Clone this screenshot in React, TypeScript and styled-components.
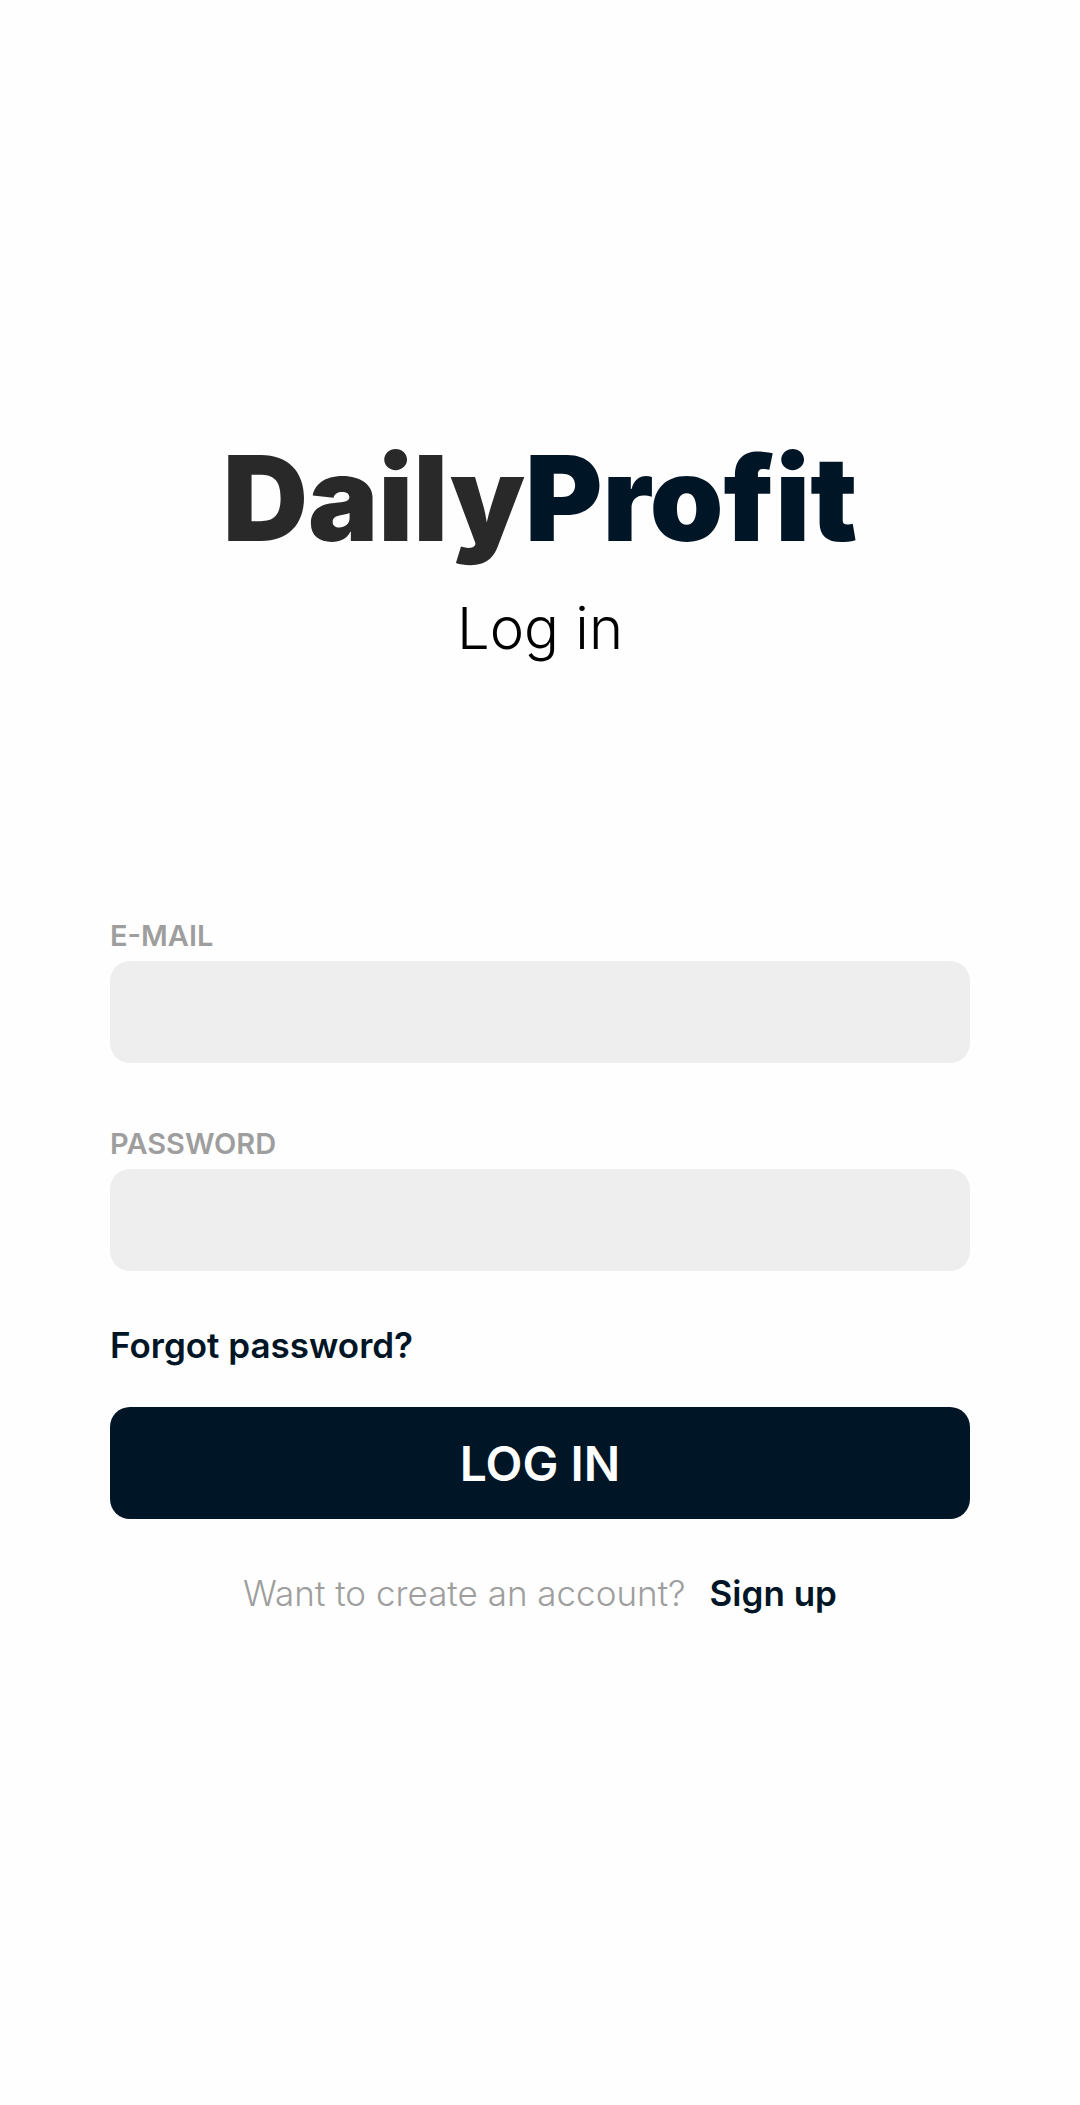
import React from "react";
import styled, { createGlobalStyle } from "styled-components";

const ink = "#001526";
const muted = "#9e9e9e";

const GlobalStyle = createGlobalStyle`
  * { box-sizing: border-box; }
  body {
    margin: 0;
    background: #fefefe;
    font-family: Inter, "Liberation Sans", sans-serif;
  }
`;

const Page = styled.main`
  min-height: 100vh;
  padding: 0 110px 56px;
  display: flex;
  flex-direction: column;
  justify-content: center;
`;

const Header = styled.header`
  display: flex;
  flex-direction: column;
  align-items: center;
  gap: 36px;
  margin-bottom: 260px;
`;

const Brand = styled.div`
  color: #292929;
  font-size: 118px;
  font-weight: 900;
  line-height: 124px;
`;

const BrandAccent = styled.span`
  color: ${ink};
`;

const Title = styled.h1`
  margin: 0;
  color: #000;
  font-size: 58px;
  font-weight: 300;
  line-height: 64px;
`;

const Form = styled.form`
  display: flex;
  flex-direction: column;
`;

const Field = styled.div`
  display: flex;
  flex-direction: column;
  gap: 9px;
  & + & { margin-top: 65px; }
`;

const Label = styled.label`
  color: ${muted};
  font-size: 29px;
  font-weight: 600;
  line-height: 32px;
`;

const Input = styled.input`
  width: 100%;
  height: 102px;
  padding: 0 32px;
  border: 0;
  border-radius: 20px;
  background: #eee;
  color: ${ink};
  font: inherit;
  font-size: 35px;
`;

const TextLink = styled.a`
  color: ${ink};
  font-size: 35px;
  font-weight: 600;
  line-height: 40px;
  text-decoration: none;
`;

const ForgotLink = styled(TextLink)`
  align-self: flex-start;
  margin: 54px 0 42px;
`;

const SubmitButton = styled.button`
  height: 112px;
  border: 0;
  border-radius: 20px;
  background: ${ink};
  color: #fff;
  font: inherit;
  font-size: 48px;
  font-weight: 600;
  cursor: pointer;
`;

const Footer = styled.footer`
  display: flex;
  justify-content: center;
  gap: 24px;
  margin-top: 54px;
`;

const Prompt = styled.span`
  color: ${muted};
  font-size: 35px;
  font-weight: 300;
  line-height: 40px;
`;

export default function App() {
  return (
    <>
      <GlobalStyle />
      <Page>
        <Header>
          <Brand>
            Daily<BrandAccent>Profit</BrandAccent>
          </Brand>
          <Title>Log in</Title>
        </Header>
        <Form onSubmit={(event) => event.preventDefault()}>
          <Field>
            <Label htmlFor="email">E-MAIL</Label>
            <Input id="email" type="email" autoComplete="email" />
          </Field>
          <Field>
            <Label htmlFor="password">PASSWORD</Label>
            <Input id="password" type="password" autoComplete="current-password" />
          </Field>
          <ForgotLink href="#forgot">Forgot password?</ForgotLink>
          <SubmitButton type="submit">LOG IN</SubmitButton>
        </Form>
        <Footer>
          <Prompt>Want to create an account?</Prompt>
          <TextLink href="#signup">Sign up</TextLink>
        </Footer>
      </Page>
    </>
  );
}
